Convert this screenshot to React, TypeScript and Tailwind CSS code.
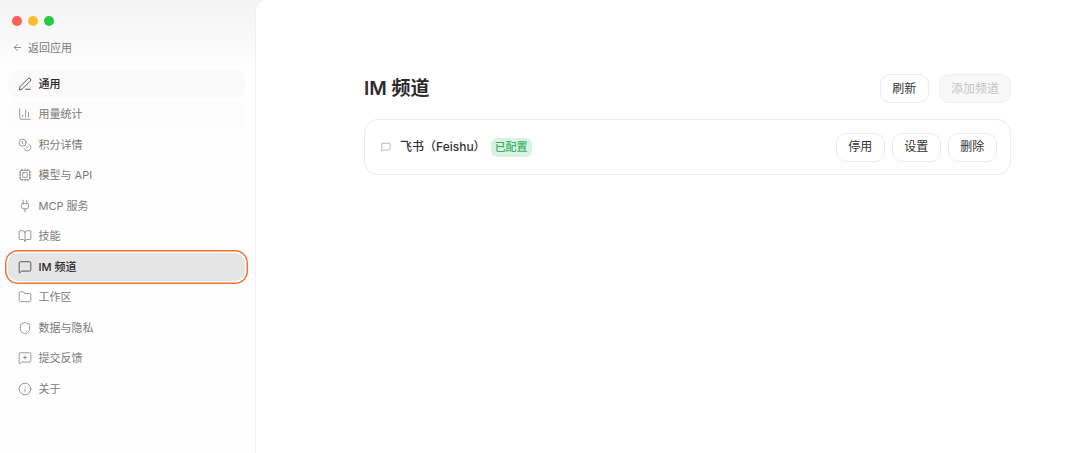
import React from "react";
import { ArrowLeft, PenLine, ChartColumn, Coins, Cpu, Plug, BookOpen, MessageSquare, Folder, Shield, MessageSquarePlus, Info } from "lucide-react";

const font = { fontFamily: '"Inter", "Liberation Sans", "Noto Sans CJK SC", sans-serif' };

const items = [
  { label: "通用", Icon: PenLine, state: "first" },
  { label: "用量统计", Icon: ChartColumn, state: "hover" },
  { label: "积分详情", Icon: Coins, state: "" },
  { label: "模型与 API", Icon: Cpu, state: "" },
  { label: "MCP 服务", Icon: Plug, state: "" },
  { label: "技能", Icon: BookOpen, state: "" },
  { label: "IM 频道", Icon: MessageSquare, state: "active" },
  { label: "工作区", Icon: Folder, state: "" },
  { label: "数据与隐私", Icon: Shield, state: "" },
  { label: "提交反馈", Icon: MessageSquarePlus, state: "" },
  { label: "关于", Icon: Info, state: "" },
];

function NavItem({ label, Icon, state }: { label: string; Icon: typeof PenLine; state: string }) {
  const cls =
    state === "first"
      ? "bg-[#fafafa] text-[#262626] font-medium"
      : state === "hover"
        ? "bg-[#fcfcfc] text-[#7a7a7a]"
        : state === "active"
          ? "bg-[#e5e5e5] text-[#2a2a2a] font-medium shadow-[0_0_0_1.5px_#ffffff,0_0_0_3px_#f4703a]"
          : "text-[#7a7a7a]";
  return (
    <div className={`flex h-[27.5px] items-center gap-[6.5px] rounded-[10px] pl-[10px] text-[11px] ${cls}`}>
      <Icon size={14} strokeWidth={1.3} className="shrink-0" />
      <span>{label}</span>
    </div>
  );
}

function Btn({ children, disabled }: { children: React.ReactNode; disabled?: boolean }) {
  return (
    <div
      className={`flex h-[29px] items-center justify-center rounded-[10px] border text-[12px] ${
        disabled ? "w-[72px] border-[#f0f0f0] bg-[#f8f8f8] text-[#c4c4c4]" : "w-[49.5px] border-[#ececec] bg-white text-[#333333]"
      }`}
    >
      {children}
    </div>
  );
}

export default function App() {
  return (
    <div className="flex h-[453px] w-[1080px] overflow-hidden bg-[#f5f5f5]" style={font}>
      <aside className="flex w-[255px] shrink-0 flex-col bg-gradient-to-b from-[#f3f3f3] from-0% to-[#fefefe] to-[15%]">
        <div className="flex gap-[6px] pl-3 pt-[16px]">
          <span className="h-[10px] w-[10px] rounded-full bg-[#ff5f57]" />
          <span className="h-[10px] w-[10px] rounded-full bg-[#febc2e]" />
          <span className="h-[10px] w-[10px] rounded-full bg-[#28c840]" />
        </div>
        <div className="mt-[14px] flex h-[15px] items-center gap-[5px] pl-3 text-[11px] leading-[16px] text-[#7a7a7a]">
          <ArrowLeft size={11} strokeWidth={1.6} className="text-[#6f6f6f]" />
          <span className="pt-[1px]">返回应用</span>
        </div>
        <nav className="mt-[15px] flex flex-col gap-[3px] pl-2 pr-[10px]">
          {items.map((i) => (
            <NavItem key={i.label} {...i} />
          ))}
        </nav>
      </aside>
      <main className="flex-1 rounded-tl-[10px] border-l border-[#f0f0f0] bg-white pl-[108px] pr-[69px] pt-[74px]">
        <div className="flex h-[29px] items-center justify-between">
          <h1 className="pt-[2px] text-[19px] font-semibold text-[#2b2b2b]">IM 频道</h1>
          <div className="flex gap-[10px]">
            <Btn>刷新</Btn>
            <Btn disabled>添加频道</Btn>
          </div>
        </div>
        <div className="mt-[16px] flex h-[56px] items-center justify-between rounded-[14px] border border-[#ececec] bg-white pl-4 pr-[13px]">
          <div className="flex items-center">
            <MessageSquare size={10} strokeWidth={1.2} className="text-[#777777]" />
            <span className="ml-[9px] text-[12px] font-medium text-[#333333]">飞书（Feishu）</span>
            <span className="ml-[5px] flex h-[19px] items-center rounded-[6px] bg-[#d9f2e1] px-[4px] text-[11px] font-medium text-[#35b565]">已配置</span>
          </div>
          <div className="flex gap-[6.5px]">
            <Btn>停用</Btn>
            <Btn>设置</Btn>
            <Btn>删除</Btn>
          </div>
        </div>
      </main>
    </div>
  );
}
